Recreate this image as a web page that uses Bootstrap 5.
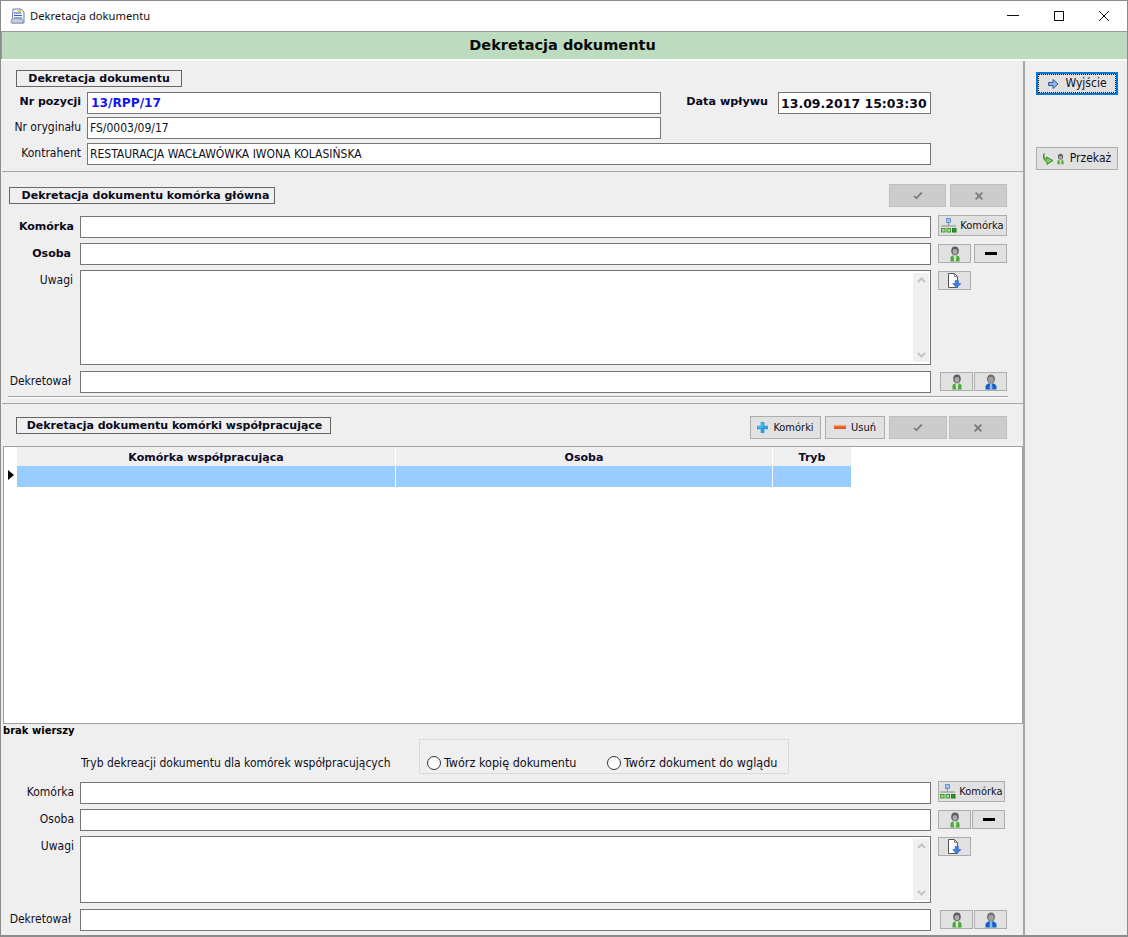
<!DOCTYPE html>
<html lang="pl">
<head>
<meta charset="UTF-8">
<title>Dekretacja dokumentu</title>
<link href="https://cdn.jsdelivr.net/npm/bootstrap@5.3.0/dist/css/bootstrap.min.css" rel="stylesheet">
<style>
html, body { height: 100%; overflow: hidden; }
body { background: #efefef; font-family: "DejaVu Sans Condensed", "DejaVu Sans", sans-serif; font-stretch: condensed; font-size: 12px; color: #10101c; line-height: 14px; }
.win { width: 1128px; height: 937px; border: 1px solid #8c8c8c; border-bottom: 2px solid #8c8c8c; overflow: hidden; background: #efefef; }
.titlebar { height: 30px; background: #fff; padding-left: 9px; font-family: "Noto Sans", sans-serif; font-stretch: normal; font-size: 11.2px; color: #111; }
.titlebar svg { margin-right: 4px; }
.wbtns { width: 137px; }
.wbtns svg { display: block; margin: auto; }
.banner { height: 28px; background: #bddbbf; border-top: 1px solid #9a9a9a; border-left: 1px solid #9a9a9a; font: bold 14.5px/27px "DejaVu Sans", sans-serif; color: #0a0a0a; text-align: center; padding-right: 4px; }
.gap-white { height: 2px; background: #fff; }
.body-wrap { height: 874px; }
.leftp { width: 1022px; padding-left: 1px; }
.rightp { width: 103px; border-left: 2px solid #a6a6a6; padding: 11px 0 0 11px; }
.sec1 { height: 111px; border-bottom: 1px solid #a6a6a6; padding-top: 9px; }
.sec2 { height: 232px; border-bottom: 1px solid #a6a6a6; }
.legend-box { display: inline-block; height: 17px; border: 1px solid #666; font: bold 11px/15px "DejaVu Sans", sans-serif; color: #0a0a1a; text-align: center; }
.lg1 { width: 166px; margin-left: 14px; }
.lg2 { width: 266px; margin-left: 7px; padding-left: 7px; }
.lg3 { width: 315px; margin-left: 14px; padding-left: 2px; }
.frow { display: flex; align-items: flex-start; }
.lab { flex: none; text-align: right; padding-top: 3px; }
.lab-b { font: bold 11px/14px "DejaVu Sans", sans-serif; color: #0a0a1a; }
.w-a { width: 78px; }
.w-top { width: 85px; padding-right: 6px; }
.fld { flex: none; background: #fff; border: 1px solid #767676; height: 22px; padding: 3px 0 0 2px; white-space: nowrap; border-radius: 0; }
.f-long { width: 851px; }
.f-top { width: 574px; }
.f-top-long { width: 844px; }
.f-date { width: 153px; font: bold 12.5px/15px "DejaVu Sans", sans-serif; color: #0a0a1a; }
.f-num { font: bold 12.2px/15px "DejaVu Sans", sans-serif; color: #1414f0; padding-left: 3px; }
.fta { position: relative; }
.scrollb { position: absolute; top: 1px; right: 0; bottom: 1px; width: 16px; background: #f0f0f0; margin: 1px 1px 1px 0; display: flex; flex-direction: column; justify-content: space-between; align-items: center; padding: 4px 0; }
.sbtn { flex: none; height: 19px; padding: 0; border: 1px solid #adadad; border-radius: 0; background: #e1e1e1; color: #10101c; font-size: 11px; line-height: 17px; display: inline-flex; align-items: center; justify-content: center; gap: 3px; }
.sbtn.disabled, .sbtn:disabled { background: #cccccc; border-color: #bfbfbf; opacity: 1; }
.b-sq { width: 33px; }
.b-kom { width: 69px; height: 21px; }
.b-dis { width: 57px; height: 23px; }
.b-side { width: 82px; height: 23px; gap: 6px; font-size: 12px; }
.b-focus { border: 2px solid #0078d7; outline: 1px dotted #111; outline-offset: -3px; }
.side-gap { margin-top: 52px; }
.thin-rule { height: 2px; border-top: 1px solid #a0a0a0; background: #fff; margin: 3px 15px 0 6px; }
.grid-box { height: 278px; margin-left: 1px; border: 1px solid #a0a0a0; background: #fff; width: 1020px; }
.grid-box table { width: 835px; margin-left: 13px; border-collapse: separate; border-spacing: 0; table-layout: fixed; }
.grid-box th { height: 19px; box-sizing: border-box; background: #efefef; font: bold 11px/17px "DejaVu Sans", sans-serif; text-align: center; padding: 2px 0 0; border-right: 1px solid #fff; color: #0a0a2a; }
.grid-box td { height: 21px; background: #99ccff; padding: 0; border-right: 1px solid #fff; }
.grid-wrap { position: relative; }
.row-arrow { position: absolute; left: 6px; top: 24px; width: 0; height: 0; border-left: 6px solid #000; border-top: 5px solid transparent; border-bottom: 5px solid transparent; }
.brak { font: bold 10px/14px "DejaVu Sans", sans-serif; color: #000; padding-left: 1px; height: 15px; }
.radio-box { width: 370px; height: 35px; border: 1px solid #d9d9d9; padding-top: 15px; padding-left: 7px; font-size: 12.5px; }
.radio-dot { display: inline-block; flex: none; width: 14px; height: 14px; border: 1px solid #333; border-radius: 50%; background: #fff; margin-right: 3px; }
.tryb-txt { width: 417px; padding: 17px 0 0 79px; white-space: nowrap; }
</style>
</head>
<body>
<svg width="0" height="0" class="position-absolute">
  <symbol id="ic-user-g" viewBox="0 0 16 16">
    <ellipse cx="8" cy="4.800" rx="3.800" ry="4.300" fill="#5f5f5f"/><ellipse cx="8" cy="5.800" rx="2.300" ry="2.700" fill="#a9a9a9"/>
    <path d="M3.500 15.500v-3.500c0-1.300 1.500-2.200 2.700-2.500h3.600c1.200.3 2.700 1.200 2.700 2.500v3.500z" fill="#4ea63c"/><path d="M6.500 9.500h3l-.5 6H7z" fill="#cdeac3"/>
  </symbol>
  <symbol id="ic-user-b" viewBox="0 0 16 16">
    <ellipse cx="8" cy="5" rx="4" ry="4.600" fill="#6e6e6e"/><ellipse cx="8" cy="5.800" rx="2.700" ry="3.100" fill="#a0a0a0"/>
    <path d="M2.500 15.500v-3c0-1.600 2-2.700 3.500-3h4c1.500.3 3.500 1.400 3.500 3v3z" fill="#1560c4"/><path d="M7 9.500h2l.5 6h-3z" fill="#8fbdf2"/>
  </symbol>
  <symbol id="ic-org" viewBox="0 0 16 15">
    <rect x="5.500" y="0.500" width="4" height="4" fill="#9cc2f2" stroke="#5b88d0" stroke-width=".8"/>
    <path d="M7.500 4.500v3M0 8h15" fill="none" stroke="#8a8a8a"/>
    <rect x="0.500" y="10.500" width="3.500" height="3.500" fill="#a8dc98" stroke="#3f9a30"/><rect x="6" y="10.500" width="3.500" height="3.500" fill="#a8dc98" stroke="#3f9a30"/><rect x="11.500" y="10.500" width="3.500" height="3.500" fill="#2f9a30" stroke="#1e7a20"/>
  </symbol>
  <symbol id="ic-doc" viewBox="0 0 16 16">
    <path d="M1.500 .5h6l3 3v11h-9z" fill="#fff" stroke="#555"/><path d="M7.500 .5v3h3" fill="none" stroke="#888"/>
    <path d="M8 7.500h3.500v3h2.500L9.700 15 5.500 10.500H8z" fill="#3d7fe0" stroke="#2a62b8" stroke-width=".5"/>
  </symbol>
  <symbol id="ic-exit" viewBox="0 0 12 12">
    <path d="M1.500 4.500h4.500V1.500l5 4.500-5 4.500V7.500H1.500z" fill="#8fb6ee" stroke="#31568f"/>
  </symbol>
  <symbol id="ic-pass" viewBox="0 0 12 12">
    <path d="M1 .5c-.5 3 .5 5 2.500 6V4L10 7.500 4 11.500V9C1.500 8.500-.5 5 1 .5z" fill="#84c75c" stroke="#2f7a1c" stroke-width=".8"/>
  </symbol>
  <symbol id="ic-plus" viewBox="0 0 12 12">
    <path d="M4 0h4v4h4v4H8v4H4V8H0V4h4z" fill="#27a0dc"/><path d="M5 1h1v4H1v1h4" fill="#7fd0f5"/>
  </symbol>
  <symbol id="ic-check" viewBox="0 0 12 12">
    <path d="M1.500 6.500 4.500 9.500 10.500 3l-1.500-1-4.500 5-1.500-1.500z" fill="#7c7c7c"/>
  </symbol>
  <symbol id="ic-x" viewBox="0 0 12 12">
    <path d="M2 3.200 3.200 2 6 4.600 8.800 2 10 3.200 7.300 6 10 8.800 8.800 10 6 7.400 3.200 10 2 8.800 4.700 6z" fill="#7c7c7c"/>
  </symbol>
</svg>

<div class="win d-flex flex-column">
  <div class="titlebar d-flex align-items-center">
    <svg width="16" height="16" viewBox="0 0 16 16"><path d="M3 1h8l3 3v11H2z" fill="#eef2fa" stroke="#6f7fa8"/><path d="M4 5h7M4 7.500h8M4 10h8" stroke="#3f5fae"/><path d="M1 12c3-2 9-2 12 0v3H1z" fill="#c6ccd8" stroke="#6f7fa8" stroke-width=".6"/><rect x="8" y="2" width="3" height="2" fill="#e8c75a"/></svg>
    <span>Dekretacja dokumentu</span>
    <div class="wbtns ms-auto d-flex">
      <div class="flex-fill"><svg width="12" height="12" viewBox="0 0 12 12"><path d="M0 5.500h12" stroke="#111"/></svg></div>
      <div class="flex-fill"><svg width="12" height="12" viewBox="0 0 12 12"><rect x="1.500" y="1.500" width="9" height="9" fill="none" stroke="#111"/></svg></div>
      <div class="flex-fill"><svg width="12" height="12" viewBox="0 0 12 12"><path d="M1 1l10 10M11 1 1 11" stroke="#111" fill="none"/></svg></div>
    </div>
  </div>
  <div class="banner">Dekretacja dokumentu</div>
  <div class="gap-white"></div>

  <div class="body-wrap d-flex">
    <div class="leftp">
      <!-- dokument -->
      <div class="sec1">
        <div class="legend-box lg1">Dekretacja dokumentu</div>
        <div class="frow" style="margin-top:5px">
          <div class="lab w-top lab-b">Nr pozycji</div>
          <div class="fld f-top f-num">13/RPP/17</div>
          <div class="lab lab-b" style="width:84px;margin:0 10px 0 23px;font-size:11.2px">Data wpływu</div>
          <div class="fld f-date">13.09.2017 15:03:30</div>
        </div>
        <div class="frow" style="margin-top:3px">
          <div class="lab w-top">Nr oryginału</div>
          <div class="fld f-top">FS/0003/09/17</div>
        </div>
        <div class="frow" style="margin-top:4px">
          <div class="lab w-top">Kontrahent</div>
          <div class="fld f-top-long">RESTAURACJA WACŁAWÓWKA IWONA KOLASIŃSKA</div>
        </div>
      </div>

      <!-- komorka glowna -->
      <div class="sec2">
        <div class="d-flex align-items-start" style="padding-top:12px;height:44px">
          <div class="legend-box lg2" style="margin-top:3px">Dekretacja dokumentu komórka główna</div>
          <div class="ms-auto d-flex" style="gap:4px;margin-right:16px">
            <button class="sbtn b-dis" disabled><svg width="12" height="12"><use href="#ic-check"/></svg></button>
            <button class="sbtn b-dis" disabled><svg width="12" height="12"><use href="#ic-x"/></svg></button>
          </div>
        </div>
        <div class="frow">
          <div class="lab w-a lab-b" style="padding-right:6px;padding-top:4px">Komórka</div>
          <div class="fld f-long"></div>
          <button class="sbtn b-kom" style="margin-left:7px;margin-top:-1px"><svg width="16" height="15"><use href="#ic-org"/></svg>Komórka</button>
        </div>
        <div class="frow" style="margin-top:5px">
          <div class="lab w-a lab-b" style="padding-right:9px;padding-top:4px">Osoba</div>
          <div class="fld f-long"></div>
          <button class="sbtn b-sq" style="margin-left:7px;margin-top:1px"><svg width="16" height="16"><use href="#ic-user-g"/></svg></button>
          <button class="sbtn b-sq" style="margin-left:3px;margin-top:1px"><svg width="12" height="4"><rect width="12" height="3" fill="#000"/></svg></button>
        </div>
        <div class="frow" style="margin-top:5px">
          <div class="lab w-a" style="padding-right:7px">Uwagi</div>
          <div class="fld f-long fta" style="height:95px"><div class="scrollb"><svg width="9" height="6"><path d="M1 5l3.500-3.500L8 5" fill="none" stroke="#c4c4c4" stroke-width="2"/></svg><svg width="9" height="6"><path d="M1 1l3.500 3.500L8 1" fill="none" stroke="#c4c4c4" stroke-width="2"/></svg></div></div>
          <button class="sbtn b-sq" style="margin-left:7px;margin-top:1px"><svg width="16" height="16"><use href="#ic-doc"/></svg></button>
        </div>
        <div class="frow" style="margin-top:6px">
          <div class="lab w-a" style="padding-right:9px">Dekretował</div>
          <div class="fld f-long"></div>
          <button class="sbtn b-sq" style="margin-left:9px;margin-top:1px"><svg width="16" height="16"><use href="#ic-user-g"/></svg></button>
          <button class="sbtn b-sq" style="margin-left:1px;margin-top:1px"><svg width="16" height="16"><use href="#ic-user-b"/></svg></button>
        </div>
        <div class="thin-rule"></div>
      </div>

      <!-- komorki wspolpracujace -->
      <div class="d-flex align-items-start" style="padding-top:12px;height:42px">
        <div class="legend-box lg3" style="margin-top:1px">Dekretacja dokumentu komórki współpracujące</div>
        <div class="ms-auto d-flex" style="margin-right:16px;gap:4px">
          <button class="sbtn" style="width:71px;height:23px;gap:5px"><svg width="11" height="11"><use href="#ic-plus"/></svg>Komórki</button>
          <button class="sbtn" style="width:60px;height:23px;gap:5px"><svg width="12" height="5"><rect width="12" height="4" fill="#e2571e"/><rect width="12" height="1.500" fill="#f5a070"/></svg>Usuń</button>
          <button class="sbtn b-dis" style="width:58px" disabled><svg width="12" height="12"><use href="#ic-check"/></svg></button>
          <button class="sbtn b-dis" style="width:58px;margin-left:-2px" disabled><svg width="12" height="12"><use href="#ic-x"/></svg></button>
        </div>
      </div>
      <div class="grid-wrap">
        <div class="grid-box">
          <table>
            <colgroup><col style="width:379px"><col style="width:377px"><col style="width:79px"></colgroup>
            <thead><tr><th>Komórka współpracująca</th><th>Osoba</th><th>Tryb</th></tr></thead>
            <tbody><tr><td></td><td></td><td></td></tr></tbody>
          </table>
        </div>
        <div class="row-arrow"></div>
      </div>
      <div class="brak">brak wierszy</div>

      <div class="d-flex">
        <div class="tryb-txt">Tryb dekreacji dokumentu dla komórek współpracujących</div>
        <div class="radio-box d-flex">
          <div class="d-flex align-items-center" style="width:180px;height:16px"><span class="radio-dot"></span>Twórz kopię dokumentu</div>
          <div class="d-flex align-items-center" style="height:16px"><span class="radio-dot"></span>Twórz dokument do wglądu</div>
        </div>
      </div>

      <div class="frow" style="margin-top:8px">
        <div class="lab w-a" style="padding-right:6px">Komórka</div>
        <div class="fld f-long"></div>
        <button class="sbtn" style="width:67px;height:21px;margin-left:7px;margin-top:-1px"><svg width="16" height="15"><use href="#ic-org"/></svg>Komórka</button>
      </div>
      <div class="frow" style="margin-top:5px">
        <div class="lab w-a" style="padding-right:6px">Osoba</div>
        <div class="fld f-long"></div>
        <button class="sbtn b-sq" style="margin-left:7px;margin-top:1px"><svg width="16" height="16"><use href="#ic-user-g"/></svg></button>
        <button class="sbtn b-sq" style="margin-left:1px;margin-top:1px"><svg width="12" height="4"><rect width="12" height="3" fill="#000"/></svg></button>
      </div>
      <div class="frow" style="margin-top:5px">
        <div class="lab w-a" style="padding-right:6px">Uwagi</div>
        <div class="fld f-long fta" style="height:67px"><div class="scrollb"><svg width="9" height="6"><path d="M1 5l3.500-3.500L8 5" fill="none" stroke="#c4c4c4" stroke-width="2"/></svg><svg width="9" height="6"><path d="M1 1l3.500 3.500L8 1" fill="none" stroke="#c4c4c4" stroke-width="2"/></svg></div></div>
        <button class="sbtn b-sq" style="margin-left:7px;margin-top:1px"><svg width="16" height="16"><use href="#ic-doc"/></svg></button>
      </div>
      <div class="frow" style="margin-top:6px">
        <div class="lab w-a" style="padding-right:9px">Dekretował</div>
        <div class="fld f-long"></div>
        <button class="sbtn b-sq" style="margin-left:9px;margin-top:1px"><svg width="16" height="16"><use href="#ic-user-g"/></svg></button>
        <button class="sbtn b-sq" style="margin-left:1px;margin-top:1px"><svg width="16" height="16"><use href="#ic-user-b"/></svg></button>
      </div>
    </div>

    <div class="rightp">
      <button class="sbtn b-side b-focus"><svg width="12" height="12"><use href="#ic-exit"/></svg>Wyjście</button>
      <div class="side-gap">
        <button class="sbtn b-side" style="gap:4px"><span class="d-inline-flex"><svg width="12" height="14"><use href="#ic-pass"/></svg><svg width="11" height="14"><use href="#ic-user-g"/></svg></span>Przekaż</button>
      </div>
    </div>
  </div>
</div>
<script src="https://cdn.jsdelivr.net/npm/bootstrap@5.3.0/dist/js/bootstrap.bundle.min.js"></script>
</body>
</html>
